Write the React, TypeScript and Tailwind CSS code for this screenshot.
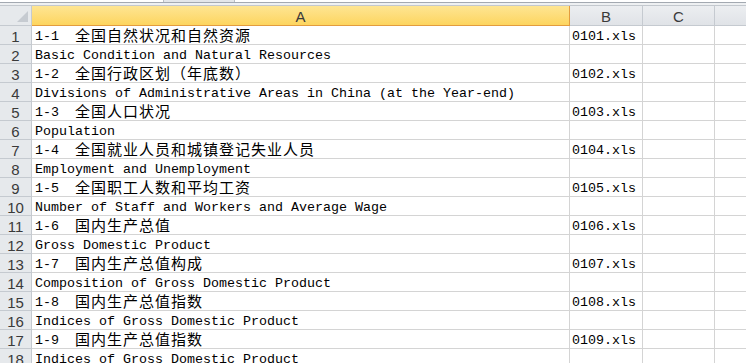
import React from "react";

const rows: [string, string][] = [
  ["1-1  全国自然状况和自然资源", "0101.xls"],
  ["Basic Condition and Natural Resources", ""],
  ["1-2  全国行政区划（年底数）", "0102.xls"],
  ["Divisions of Administrative Areas in China (at the Year-end)", ""],
  ["1-3  全国人口状况", "0103.xls"],
  ["Population", ""],
  ["1-4  全国就业人员和城镇登记失业人员", "0104.xls"],
  ["Employment and Unemployment", ""],
  ["1-5  全国职工人数和平均工资", "0105.xls"],
  ["Number of Staff and Workers and Average Wage", ""],
  ["1-6  国内生产总值", "0106.xls"],
  ["Gross Domestic Product", ""],
  ["1-7  国内生产总值构成", "0107.xls"],
  ["Composition of Gross Domestic Product", ""],
  ["1-8  国内生产总值指数", "0108.xls"],
  ["Indices of Gross Domestic Product", ""],
  ["1-9  国内生产总值指数", "0109.xls"],
  ["Indices of Gross Domestic Product", ""],
];

function CellText({ text }: { text: string }) {
  const parts = text.match(/[\u3000-\u9fff\uff00-\uffef]+|[^\u3000-\u9fff\uff00-\uffef]+/g) || [];
  return (
    <>
      {parts.map((p, i) =>
        /[\u3000-\u9fff\uff00-\uffef]/.test(p) ? (
          <span key={i} className="text-[15px] tracking-[1px]">
            {p}
          </span>
        ) : (
          <span key={i}>{p}</span>
        )
      )}
    </>
  );
}

export default function App() {
  const mono = { fontFamily: '"Liberation Mono", "Noto Sans CJK SC", monospace' };
  const sans = { fontFamily: '"Liberation Sans", Arial, sans-serif' };
  return (
    <div className="w-[746px] h-[363px] overflow-hidden bg-white flex flex-col">
      {/* top strip */}
      <div className="h-[6px] flex flex-col shrink-0">
        <div className="h-[2px] flex bg-white">
          <div className="w-[163px]" />
          <div className="w-[72px] bg-[#e3e6ea] border-x border-[#b9bec5]" />
        </div>
        <div className="h-[1px] bg-[#a3a9b1]" />
        <div className="h-[2px] bg-[#eef0f2]" />
        <div className="h-[1px] bg-[#c3c8ce]" />
      </div>
      {/* header */}
      <div className="flex h-[20px] shrink-0 text-[15px] text-[#3a3a3a]" style={sans}>
        <div className="w-[32px] h-full bg-[#e6e9ec] border-r border-b border-[#c5cad0] relative">
          <svg className="absolute right-[3px] bottom-[3px]" width="11" height="11" viewBox="0 0 11 11">
            <polygon points="11,0 11,11 0,11" fill="#c6cbd1" />
          </svg>
        </div>
        <div className="w-[538px] h-full bg-gradient-to-b from-[#fee592] to-[#fdd55e] border-r border-b border-[#e39c3e] flex items-center justify-center leading-none pt-[1px]">
          A
        </div>
        <div className="w-[73px] h-full bg-gradient-to-b from-[#eceef1] to-[#e0e3e7] border-r border-b border-[#c5cad0] flex items-center justify-center leading-none pt-[1px]">
          B
        </div>
        <div className="w-[72px] h-full bg-gradient-to-b from-[#eceef1] to-[#e0e3e7] border-r border-b border-[#c5cad0] flex items-center justify-center leading-none pt-[1px]">
          C
        </div>
        <div className="flex-1 h-full bg-gradient-to-b from-[#eceef1] to-[#e0e3e7] border-b border-[#c5cad0]" />
      </div>
      {/* rows */}
      {rows.map(([a, b], i) => (
        <div key={i} className="flex h-[19px] shrink-0">
          <div
            className="w-[32px] h-full bg-[#e6e9ec] border-r border-b border-[#c5cad0] flex items-center justify-center text-[15px] text-[#3a3a3a] leading-none pt-[2px]"
            style={sans}
          >
            {i + 1}
          </div>
          <div
            className="w-[538px] h-full border-r border-b border-[#d4d4d4] flex items-center pl-[3px] pt-[4px] text-[13.33px] text-black whitespace-pre overflow-hidden leading-none"
            style={mono}
          >
            <CellText text={a} />
          </div>
          <div
            className="w-[73px] h-full border-r border-b border-[#d4d4d4] flex items-center pl-[2px] pt-[4px] text-[13.33px] text-black whitespace-pre leading-none"
            style={mono}
          >
            {b}
          </div>
          <div className="w-[72px] h-full border-r border-b border-[#d4d4d4]" />
          <div className="flex-1 h-full border-b border-[#d4d4d4]" />
        </div>
      ))}
    </div>
  );
}
